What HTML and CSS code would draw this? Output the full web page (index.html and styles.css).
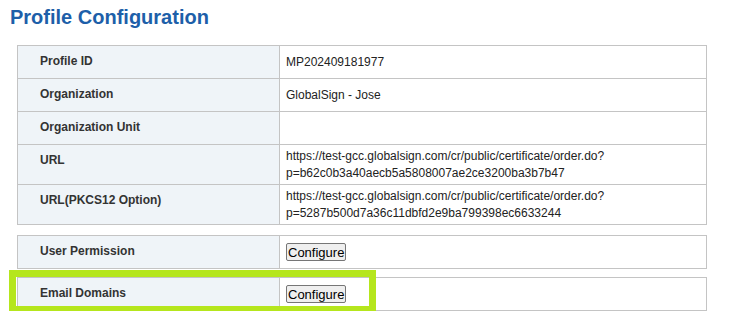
FILE: index.html
```html
<!DOCTYPE html>
<html lang="en">
<head>
  <meta charset="UTF-8" />
  <title>Profile Configuration</title>
  <link rel="stylesheet" href="styles.css">
</head>
<body>

<h1 class="page-title">Profile Configuration</h1>

<table class="config-table">
  <tr>
    <td class="label">Profile ID</td>
    <td class="value">MP202409181977</td>
  </tr>
  <tr>
    <td class="label">Organization</td>
    <td class="value">GlobalSign - Jose</td>
  </tr>
  <tr>
    <td class="label">Organization Unit</td>
    <td class="value"></td>
  </tr>
  <tr class="tall">
    <td class="label">URL</td>
    <td class="value">https://test-gcc.globalsign.com/cr/public/certificate/order.do?<br>p=b62c0b3a40aecb5a5808007ae2ce3200ba3b7b47</td>
  </tr>
  <tr class="tall">
    <td class="label">URL(PKCS12 Option)</td>
    <td class="value">https://test-gcc.globalsign.com/cr/public/certificate/order.do?<br>p=5287b500d7a36c11dbfd2e9ba799398ec6633244</td>
  </tr>
</table>

<table class="config-table">
  <tr>
    <td class="label">User Permission</td>
    <td class="value"><button class="btn">Configure</button></td>
  </tr>
</table>

<div class="highlight-wrap">
  <table class="config-table">
    <tr>
      <td class="label">Email Domains</td>
      <td class="value"><button class="btn">Configure</button></td>
    </tr>
  </table>
  <div class="highlight"></div>
</div>

</body>
</html>
```

FILE: styles.css
```css
body {
  margin: 0;
  font-family: "Liberation Sans", Arial, sans-serif;
  background: #fff;
  color: #222;
}

.page-title {
  margin: 5px 0 0 10px;
  font-size: 20px;
  line-height: 24px;
  font-weight: bold;
  color: #1d5fa9;
}

.config-table {
  border-collapse: collapse;
  width: 690px;
  margin: 16px 0 0 17px;
  font-size: 12px;
}

.config-table + .config-table {
  margin-top: 10px;
}

.highlight-wrap {
  position: relative;
  margin-top: 8px;
}

.highlight-wrap .config-table {
  margin-top: 0;
}

.config-table td {
  border: 1px solid #c4c4c4;
  height: 25px;
  padding: 0;
  line-height: 17px;
}

.config-table .tall td {
  height: 32px;
}

.label {
  width: 239px;
  padding-left: 22px !important;
  padding-top: 7px !important;
  vertical-align: top;
  font-weight: bold;
  color: #333;
  background: #eff4f8;
}

.value {
  padding-left: 6px !important;
  vertical-align: middle;
  color: #222;
}

.btn {
  font-family: "Liberation Sans", Arial, sans-serif;
  font-size: 13px;
  height: 18px;
  line-height: 15px;
  padding: 0 1px;
  margin: 0;
  color: #000;
  background: #efefef;
  border: 1px solid #767676;
  border-radius: 2px;
  vertical-align: middle;
}

.highlight {
  position: absolute;
  left: 9px;
  top: -7px;
  width: 367px;
  height: 43px;
  box-sizing: border-box;
  border: 7px solid #b5e61d;
}
```
